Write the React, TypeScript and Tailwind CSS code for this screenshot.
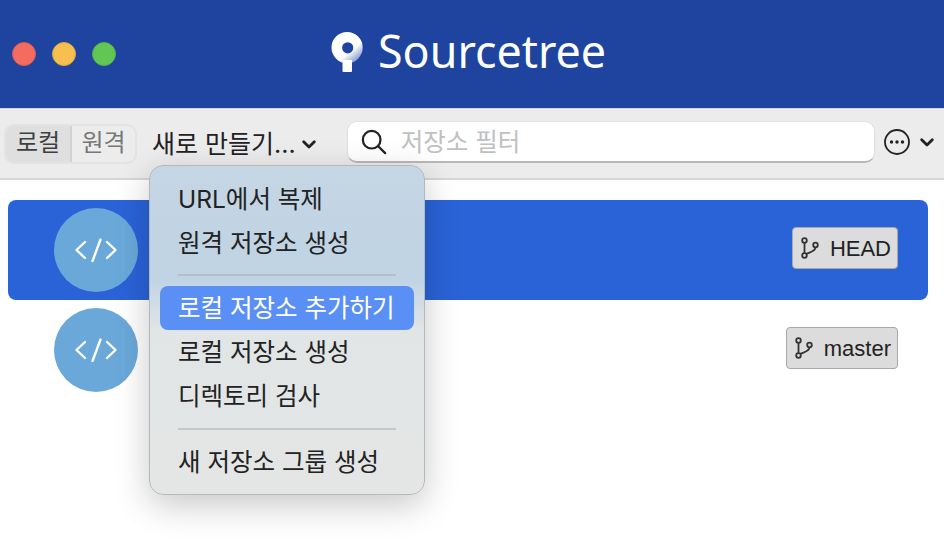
import React from "react";

const KR = "font-['Inter','Noto_Sans_CJK_KR',sans-serif]";

function Logo() {
  return (
    <svg width="32" height="40" viewBox="0 0 32 40" className="shrink-0">
      <defs>
        <linearGradient id="lg" gradientUnits="userSpaceOnUse" x1="12" y1="10" x2="27" y2="28">
          <stop offset="0" stopColor="#ffffff" />
          <stop offset="0.5" stopColor="#ffffff" />
          <stop offset="1" stopColor="#8398cc" />
        </linearGradient>
      </defs>
      <path
        fillRule="evenodd"
        fill="url(#lg)"
        d="M0.5 15.6A15.6 15.6 0 1 1 31.7 15.6A15.6 15.6 0 1 1 0.5 15.6ZM16.7 10.2A5.6 5.6 0 1 0 16.7 21.4A5.6 5.6 0 1 0 16.7 10.2Z"
      />
      <path fill="#ffffff" d="M11.5 28H21V39A1 1 0 0 1 20 40H12.5A1 1 0 0 1 11.5 39Z" />
    </svg>
  );
}

function Branch() {
  return (
    <svg width="18" height="22" viewBox="0 0 18 22" fill="none" stroke="#333333" strokeWidth="1.8" className="shrink-0">
      <circle cx="3.5" cy="3.5" r="2.3" />
      <circle cx="3.5" cy="18.5" r="2.3" />
      <circle cx="14.5" cy="8" r="2.3" />
      <path d="M3.5 5.8V16.2" />
      <path d="M14.5 10.3C14.5 14.5 9 15 5.2 17" />
    </svg>
  );
}

function Code() {
  return (
    <div className="w-[84px] h-[84px] rounded-full bg-[#6aa8da] flex items-center justify-center shrink-0">
      <svg width="44" height="26" viewBox="0 0 44 26" fill="none" stroke="#ffffff" strokeWidth="2.4" strokeLinecap="round" strokeLinejoin="round">
        <path d="M11 5L2.5 13L11 21" />
        <path d="M33 5L41.5 13L33 21" />
        <path d="M26.5 2.5L18.5 24" />
      </svg>
    </div>
  );
}

function Chevron({ className = "" }: { className?: string }) {
  return (
    <svg width="14" height="9" viewBox="0 0 14 9" fill="none" stroke="#222222" strokeWidth="2.8" strokeLinecap="round" strokeLinejoin="round" className={className}>
      <path d="M1.7 1.7L7 7L12.3 1.7" />
    </svg>
  );
}

function Badge({ label }: { label: string }) {
  return (
    <div className="h-[42px] mb-[4px] flex items-center gap-[11px] pl-[8px] pr-[6px] rounded-[4px] bg-[#dcdcdc] border border-[#a8a8a8] text-[22px] text-[#222222] font-['Liberation_Sans',sans-serif]">
      <Branch />
      <span>{label}</span>
    </div>
  );
}

function Item({ label, active }: { label: string; active?: boolean }) {
  return (
    <div
      className={
        "h-[44px] mx-[10px] px-[18px] flex items-center rounded-[8px] text-[24.5px] whitespace-nowrap " +
        (active ? "bg-[#5a90f5] text-white" : "text-[#222222]")
      }
    >
      {label}
    </div>
  );
}

export default function App() {
  return (
    <div className={"relative w-[944px] h-[550px] overflow-hidden bg-white " + KR}>
      <header className="h-[108px] bg-[#1e44a0] flex items-center pl-3">
        <div className="flex gap-4">
          <span className="w-6 h-6 rounded-full bg-[#f26d60] border border-[#dc5a4e]" />
          <span className="w-6 h-6 rounded-full bg-[#f7bf4f] border border-[#e0a83c]" />
          <span className="w-6 h-6 rounded-full bg-[#62c654] border border-[#55b148]" />
        </div>
        <div className="ml-[215px] mb-[4px] flex items-center gap-[15px] text-white">
          <Logo />
          <span className="mb-[2px] text-[44.8px] leading-none font-['Noto_Sans',sans-serif]">Sourcetree</span>
        </div>
      </header>

      <div className="h-[72px] bg-[#ececec] border-t border-t-[#d4d4d4] border-b-2 border-b-[#d6d6d6] flex items-center pl-1 pb-[3px]">
        <div className="mt-[3px] w-[133px] h-10 flex rounded-[10px] overflow-hidden border-2 border-[#e3e3e3] text-[24px] leading-none shrink-0">
          <div className="w-[66px] pb-[1px] bg-[#dfdfdf] border-r-2 border-r-[#d2d2d2] flex items-center justify-center text-[#3f3f3f]">로컬</div>
          <div className="flex-1 pb-[1px] flex items-center justify-center text-[#777777]">원격</div>
        </div>
        <span className="ml-[15px] mt-[5px] text-[25px] text-[#222222] whitespace-nowrap">새로 만들기...</span>
        <Chevron className="ml-[6px] mt-[5px] shrink-0" />
        <div className="ml-[31px] w-[528px] h-[42px] rounded-[10px] bg-white border-b-2 border-b-[#b8b8b8] border-x border-x-[#dedede] border-t border-t-[#e4e4e4] flex items-center pl-[13px] shrink-0">
          <svg width="26" height="26" viewBox="0 0 28 28" fill="none" stroke="#222222" strokeWidth="2.4" strokeLinecap="round">
            <circle cx="11.5" cy="11.5" r="9.5" />
            <path d="M18.5 18.5L26 26" />
          </svg>
          <span className="ml-[14px] mt-[2px] text-[24.5px] text-[#c0c0c0] whitespace-nowrap">저장소 필터</span>
        </div>
        <svg width="26" height="26" viewBox="0 0 26 26" fill="none" className="ml-[9px] shrink-0">
          <circle cx="13" cy="13" r="12" stroke="#222222" strokeWidth="1.8" />
          <circle cx="7.5" cy="13" r="1.7" fill="#222222" />
          <circle cx="13" cy="13" r="1.7" fill="#222222" />
          <circle cx="18.5" cy="13" r="1.7" fill="#222222" />
        </svg>
        <Chevron className="ml-[10px] shrink-0" />
      </div>

      <div className="pt-5 px-2">
        <div className="h-[100px] w-[920px] rounded-[8px] bg-[#2a63d8] flex items-center justify-between pl-[46px] pr-[30px]">
          <Code />
          <Badge label="HEAD" />
        </div>
        <div className="h-[100px] w-[920px] flex items-center justify-between pl-[46px] pr-[30px]">
          <Code />
          <Badge label="master" />
        </div>
      </div>

      <div className="absolute left-[149px] top-[165px] w-[276px] h-[330px] rounded-[14px] border border-[#b4b8bb] pt-[11px] shadow-[0_10px_34px_rgba(0,0,0,0.22)] bg-[linear-gradient(180deg,#c5d6e4_0%,#bfd3e4_34%,#e1e5e6_50%,#e4e6e5_100%)]">
        <Item label="URL에서 복제" />
        <Item label="원격 저장소 생성" />
        <div className="h-[2px] mx-[28px] mt-[9px] mb-[10px] bg-[#b2bec8]" />
        <Item label="로컬 저장소 추가하기" active />
        <Item label="로컬 저장소 생성" />
        <Item label="디렉토리 검사" />
        <div className="h-[2px] mx-[28px] mt-[10px] mb-[10px] bg-[#c4c8ca]" />
        <Item label="새 저장소 그룹 생성" />
      </div>
    </div>
  );
}
